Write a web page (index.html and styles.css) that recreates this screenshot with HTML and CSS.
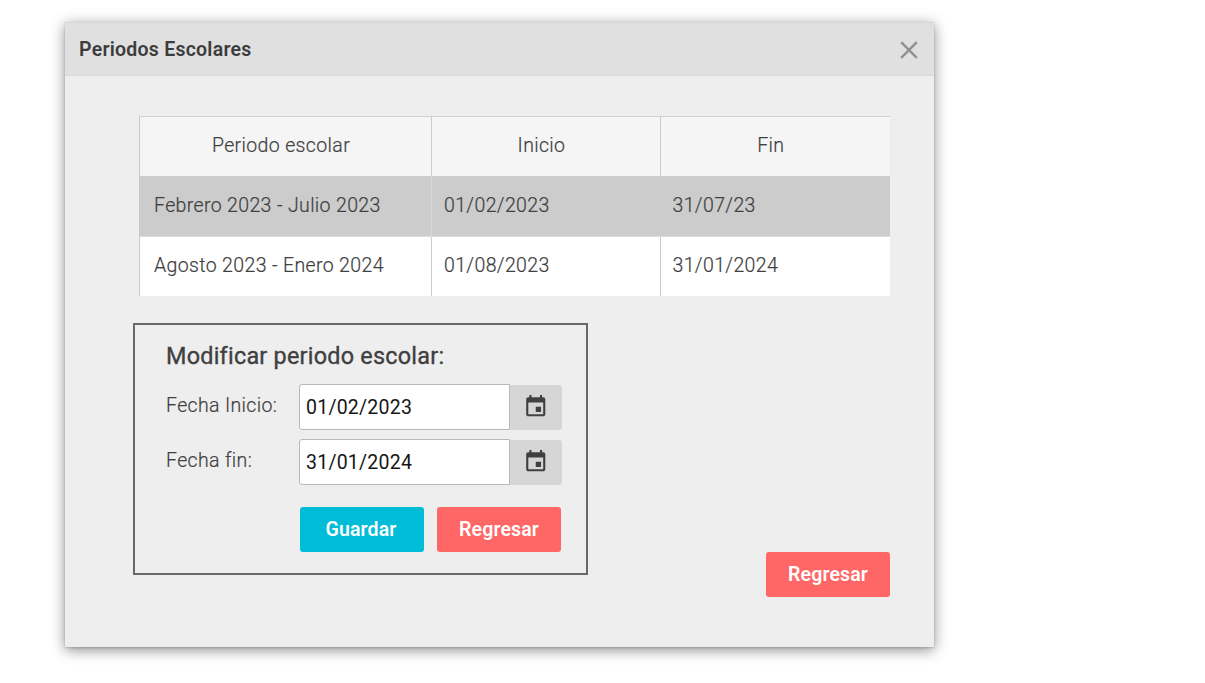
FILE: index.html
```html
<!DOCTYPE html>
<html lang="es">
<head>
<meta charset="utf-8">
<title>Periodos Escolares</title>
<link rel="stylesheet" href="styles.css">
</head>
<body>
<section class="dialog">
  <header class="dialog-header">
    <h1 class="dialog-title">Periodos Escolares</h1>
    <svg class="close" viewBox="0 0 18 18"><path d="M1.2 1.2L16.8 16.8M16.8 1.2L1.2 16.8"/></svg>
  </header>
  <div class="dialog-body">
    <div class="table">
      <div class="row head"><div class="cell">Periodo escolar</div><div class="cell">Inicio</div><div class="cell">Fin</div></div>
      <div class="row selected"><div class="cell">Febrero 2023 - Julio 2023</div><div class="cell">01/02/2023</div><div class="cell">31/07/23</div></div>
      <div class="row"><div class="cell">Agosto 2023 - Enero 2024</div><div class="cell">01/08/2023</div><div class="cell">31/01/2024</div></div>
    </div>
    <div class="editor">
      <h2 class="editor-title">Modificar periodo escolar:</h2>
      <div class="field">
        <span class="label">Fecha Inicio:</span>
        <div class="input">01/02/2023</div>
        <div class="picker"><svg class="calendar" viewBox="0 0 24 24"><path d="M17 12h-5v5h5v-5zM16 1v2H8V1H6v2H5c-1.11 0-1.99.9-1.99 2L3 19c0 1.1.89 2 2 2h14c1.1 0 2-.9 2-2V5c0-1.1-.9-2-2-2h-1V1h-2zm3 18H5V8h14v11z"/></svg></div>
      </div>
      <div class="field">
        <span class="label">Fecha fin:</span>
        <div class="input">31/01/2024</div>
        <div class="picker"><svg class="calendar" viewBox="0 0 24 24"><path d="M17 12h-5v5h5v-5zM16 1v2H8V1H6v2H5c-1.11 0-1.99.9-1.99 2L3 19c0 1.1.89 2 2 2h14c1.1 0 2-.9 2-2V5c0-1.1-.9-2-2-2h-1V1h-2zm3 18H5V8h14v11z"/></svg></div>
      </div>
      <div class="actions">
        <div class="button save">Guardar</div>
        <div class="button back">Regresar</div>
      </div>
    </div>
    <div class="button back dialog-back">Regresar</div>
  </div>
</section>
</body>
</html>
```
FILE: styles.css
```css
* { box-sizing: border-box; }
body {
  margin: 0;
  padding: 22px 0 0 65px;
  height: 683px;
  overflow: hidden;
  background: #fff;
  color: #404040;
  font: 400 19.5px/24px Roboto, sans-serif;
}
.dialog {
  width: 869px;
  height: 625px;
  background: #eee;
  box-shadow: 0 3px 13px rgba(0, 0, 0, .45), 0 1px 2px rgba(0, 0, 0, .15);
}
.dialog-header {
  display: flex;
  align-items: center;
  justify-content: space-between;
  height: 54px;
  padding: 0 16px 0 14px;
  background: #e0e0e0;
  border-top: 1px solid #d8d8d8;
  border-bottom: 1px solid #dadada;
}
.dialog-title { margin: 2px 0 0; font-size: 19.5px; font-weight: 600; letter-spacing: .25px; color: #3c3c3c; }
.close { width: 18px; height: 18px; margin-top: 2px; fill: none; stroke: #909090; stroke-width: 2.4; }
.dialog-body {
  display: flex;
  flex-direction: column;
  align-items: flex-start;
  padding: 40px 44px 0 68px;
}
.table {
  width: 751px;
  margin-left: 6px;
  border-top: 1px solid #d0d0d0;
  border-left: 1px solid #c8c8c8;
  font-weight: 300;
  letter-spacing: .36px;
  -webkit-text-stroke: .2px #404040;
}
.row {
  display: grid;
  grid-template-columns: 292px 229px 229px;
  height: 60px;
  background: #fff;
}
.row:last-child { height: 59px; }
.row .cell { padding: 17px 12px 0; border-right: 1px solid #ccc; }
.row .cell:first-child { padding-left: 14px; }
.row .cell:last-child { padding-left: 11.5px; border-right: 0; }
.head { background: #f5f5f5; height: 59px; text-align: center; }
.head .cell { padding-top: 17px; padding-right: 21px; }
.head .cell:first-child { padding-right: 23px; }
.selected { background: #ccc; border-bottom: 1px solid #dcdcdc; height: 61px; }
.selected .cell { padding-top: 18px; border-right-color: #dadada; }
.selected .cell:nth-child(2) { border-right-color: transparent; }
.editor {
  width: 455px;
  height: 252px;
  margin-top: 27px;
  padding: 17px 24px 0 31px;
  border: 2px solid #686868;
}
.editor-title { margin: 0 0 14px; font-size: 23.4px; line-height: 28px; font-weight: 400; letter-spacing: .24px; -webkit-text-stroke: .35px #404040; }
.field { display: flex; height: 46px; margin-bottom: 9px; }
.label { width: 133px; padding-top: 10px; font-weight: 300; letter-spacing: .36px; -webkit-text-stroke: .2px #404040; }
.input {
  width: 211px;
  padding: 11px 6px 0;
  background: #fff;
  border: 1px solid #b8b8b8;
  border-radius: 3px 0 0 3px;
  color: #161616;
  letter-spacing: .23px;
}
.picker {
  width: 52px;
  height: 45px;
  margin-top: 1px;
  padding: 9px 0 0 13px;
  background: #d6d6d6;
  border-radius: 0 3px 3px 0;
}
.calendar { display: block; width: 25.5px; height: 25.5px; fill: #404040; }
.actions { display: flex; gap: 13px; padding: 13px 0 0 134px; }
.button {
  width: 124px;
  height: 45px;
  padding: 11px 0 0;
  border-radius: 3px;
  color: #fff;
  font-weight: 600;
  letter-spacing: .16px;
  text-align: center;
}
.save { padding-right: 2px; background: #00bcd7; }
.back { background: #f66; }
.dialog-back { align-self: flex-end; margin-top: -23px; }
```
